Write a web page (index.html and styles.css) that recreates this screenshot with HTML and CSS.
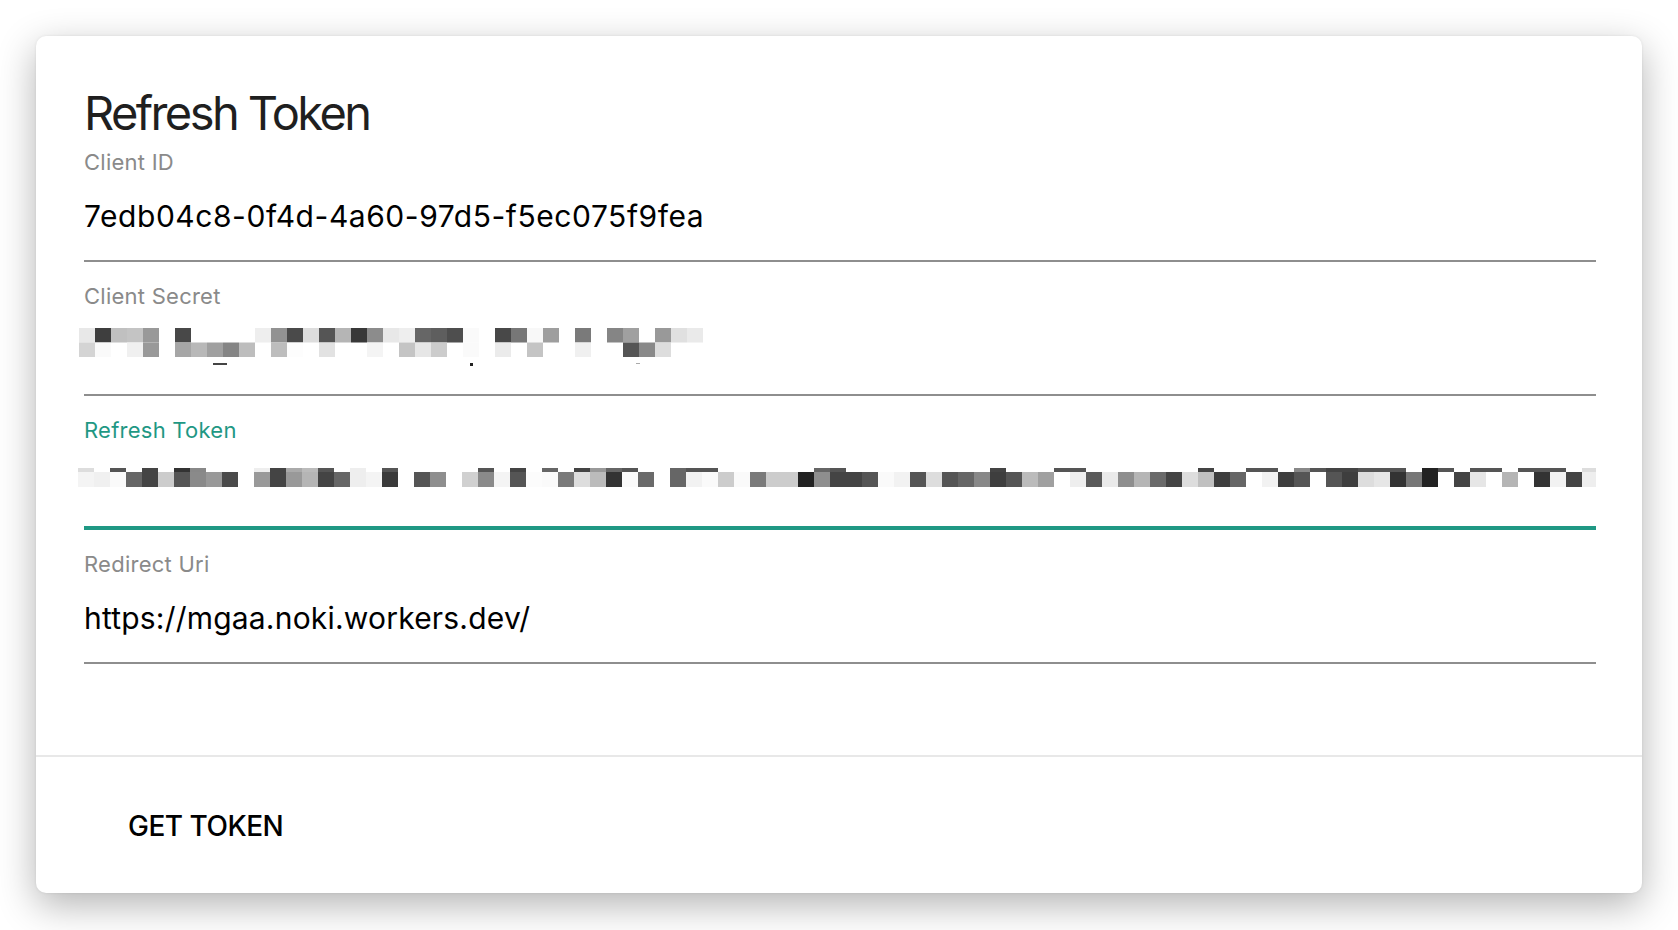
FILE: index.html
```html
<!DOCTYPE html>
<html lang="en">
<head>
<meta charset="utf-8">
<title>Refresh Token</title>
<link rel="stylesheet" href="styles.css">
</head>
<body>
<div class="card">
  <div class="card-content">
    <h1 class="title">Refresh Token</h1>

    <div class="field">
      <div class="label">Client ID</div>
      <div class="value value-id">7edb04c8-0f4d-4a60-97d5-f5ec075f9fea</div>
    </div>

    <div class="field">
      <div class="label">Client Secret</div>
      <div class="value value-redacted">
        <svg class="secret-pixels" width="624" height="40" viewBox="0 0 624 40" aria-label="redacted">
          <g class="row1">
            <rect x="0" y="0" width="16" height="14.5" fill="#e8e8e8"/>
            <rect x="16" y="0" width="16" height="14.5" fill="#3e3e3e"/>
            <rect x="32" y="0" width="16" height="14.5" fill="#c0c0c0"/>
            <rect x="48" y="0" width="16" height="14.5" fill="#c4c4c4"/>
            <rect x="64" y="0" width="16" height="14.5" fill="#999"/>
            <rect x="96" y="0" width="16" height="14.5" fill="#484848"/>
            <rect x="176" y="0" width="16" height="14.5" fill="#eee"/>
            <rect x="192" y="0" width="16" height="14.5" fill="#929292"/>
            <rect x="208" y="0" width="16" height="14.5" fill="#4a4a4a"/>
            <rect x="224" y="0" width="16" height="14.5" fill="#ddd"/>
            <rect x="240" y="0" width="16" height="14.5" fill="#555"/>
            <rect x="256" y="0" width="16" height="14.5" fill="#b5b5b5"/>
            <rect x="272" y="0" width="16" height="14.5" fill="#383838"/>
            <rect x="288" y="0" width="16" height="14.5" fill="#8c8c8c"/>
            <rect x="304" y="0" width="16" height="14.5" fill="#e8e8e8"/>
            <rect x="320" y="0" width="16" height="14.5" fill="#eee"/>
            <rect x="336" y="0" width="16" height="14.5" fill="#666"/>
            <rect x="352" y="0" width="16" height="14.5" fill="#5e5e5e"/>
            <rect x="368" y="0" width="16" height="14.5" fill="#4e4e4e"/>
            <rect x="384" y="0" width="16" height="14.5" fill="#fafafa"/>
            <rect x="416" y="0" width="16" height="14.5" fill="#484848"/>
            <rect x="432" y="0" width="16" height="14.5" fill="#777"/>
            <rect x="448" y="0" width="16" height="14.5" fill="#f8f8f8"/>
            <rect x="464" y="0" width="16" height="14.5" fill="#9e9e9e"/>
            <rect x="496" y="0" width="16" height="14.5" fill="#7a7a7a"/>
            <rect x="528" y="0" width="16" height="14.5" fill="#858585"/>
            <rect x="544" y="0" width="16" height="14.5" fill="#a0a0a0"/>
            <rect x="576" y="0" width="16" height="14.5" fill="#999"/>
            <rect x="592" y="0" width="16" height="14.5" fill="#e0e0e0"/>
            <rect x="608" y="0" width="16" height="14.5" fill="#eaeaea"/>
          </g>
          <g class="row2">
            <rect x="0" y="14.5" width="16" height="14.5" fill="#d4d4d4"/>
            <rect x="16" y="14.5" width="16" height="14.5" fill="#fafafa"/>
            <rect x="48" y="14.5" width="16" height="14.5" fill="#f0f0f0"/>
            <rect x="64" y="14.5" width="16" height="14.5" fill="#999"/>
            <rect x="96" y="14.5" width="16" height="14.5" fill="#a6a6a6"/>
            <rect x="112" y="14.5" width="16" height="14.5" fill="#b8b8b8"/>
            <rect x="128" y="14.5" width="16" height="14.5" fill="#a0a0a0"/>
            <rect x="144" y="14.5" width="16" height="14.5" fill="#858585"/>
            <rect x="160" y="14.5" width="16" height="14.5" fill="#bdbdbd"/>
            <rect x="192" y="14.5" width="16" height="14.5" fill="#bdbdbd"/>
            <rect x="208" y="14.5" width="16" height="14.5" fill="#fdfdfd"/>
            <rect x="240" y="14.5" width="16" height="14.5" fill="#e2e2e2"/>
            <rect x="288" y="14.5" width="16" height="14.5" fill="#f4f4f4"/>
            <rect x="320" y="14.5" width="16" height="14.5" fill="#c4c4c4"/>
            <rect x="336" y="14.5" width="16" height="14.5" fill="#e6e6e6"/>
            <rect x="352" y="14.5" width="16" height="14.5" fill="#ccc"/>
            <rect x="384" y="14.5" width="16" height="14.5" fill="#fafafa"/>
            <rect x="416" y="14.5" width="16" height="14.5" fill="#ebebeb"/>
            <rect x="448" y="14.5" width="16" height="14.5" fill="#c4c4c4"/>
            <rect x="496" y="14.5" width="16" height="14.5" fill="#f0f0f0"/>
            <rect x="544" y="14.5" width="16" height="14.5" fill="#555"/>
            <rect x="560" y="14.5" width="16" height="14.5" fill="#898989"/>
            <rect x="576" y="14.5" width="16" height="14.5" fill="#ddd"/>
          </g>
          <g class="marks">
            <rect x="134" y="35" width="14" height="2" fill="#444"/>
            <rect x="391" y="35" width="3" height="3" fill="#222"/>
            <rect x="557" y="35" width="4" height="1" fill="#aaa"/>
          </g>
        </svg>
      </div>
    </div>

    <div class="field field-focused">
      <div class="label label-focused">Refresh Token</div>
      <div class="value value-redacted">
        <svg class="token-pixels" width="1518" height="19" viewBox="0 0 1518 19" aria-label="redacted">
          <g class="tops">
            <rect x="0" y="0" width="16" height="4" fill="#ddd"/>
            <rect x="32" y="0" width="16" height="4" fill="#555"/>
            <rect x="64" y="0" width="16" height="4" fill="#444"/>
            <rect x="96" y="0" width="16" height="4" fill="#333"/>
            <rect x="112" y="0" width="16" height="4" fill="#888"/>
            <rect x="176" y="0" width="16" height="4" fill="#eee"/>
            <rect x="192" y="0" width="16" height="4" fill="#444"/>
            <rect x="208" y="0" width="16" height="4" fill="#aaa"/>
            <rect x="224" y="0" width="16" height="4" fill="#bbb"/>
            <rect x="240" y="0" width="16" height="4" fill="#555"/>
            <rect x="272" y="0" width="16" height="4" fill="#eee"/>
            <rect x="304" y="0" width="16" height="4" fill="#555"/>
            <rect x="400" y="0" width="16" height="4" fill="#555"/>
            <rect x="432" y="0" width="16" height="4" fill="#444"/>
            <rect x="464" y="0" width="16" height="4" fill="#666"/>
            <rect x="496" y="0" width="16" height="4" fill="#444"/>
            <rect x="512" y="0" width="16" height="4" fill="#999"/>
            <rect x="528" y="0" width="16" height="4" fill="#666"/>
            <rect x="544" y="0" width="16" height="4" fill="#555"/>
            <rect x="592" y="0" width="16" height="4" fill="#666"/>
            <rect x="608" y="0" width="16" height="4" fill="#555"/>
            <rect x="624" y="0" width="16" height="4" fill="#555"/>
            <rect x="736" y="0" width="16" height="4" fill="#666"/>
            <rect x="752" y="0" width="16" height="4" fill="#555"/>
            <rect x="912" y="0" width="16" height="4" fill="#444"/>
            <rect x="976" y="0" width="16" height="4" fill="#555"/>
            <rect x="992" y="0" width="16" height="4" fill="#555"/>
            <rect x="1120" y="0" width="16" height="4" fill="#444"/>
            <rect x="1168" y="0" width="16" height="4" fill="#555"/>
            <rect x="1184" y="0" width="16" height="4" fill="#555"/>
            <rect x="1216" y="0" width="16" height="4" fill="#888"/>
            <rect x="1232" y="0" width="16" height="4" fill="#555"/>
            <rect x="1248" y="0" width="16" height="4" fill="#444"/>
            <rect x="1264" y="0" width="16" height="4" fill="#444"/>
            <rect x="1280" y="0" width="16" height="4" fill="#555"/>
            <rect x="1296" y="0" width="16" height="4" fill="#555"/>
            <rect x="1312" y="0" width="16" height="4" fill="#555"/>
            <rect x="1344" y="0" width="16" height="4" fill="#222"/>
            <rect x="1360" y="0" width="16" height="4" fill="#555"/>
            <rect x="1392" y="0" width="16" height="4" fill="#555"/>
            <rect x="1408" y="0" width="16" height="4" fill="#555"/>
            <rect x="1440" y="0" width="16" height="4" fill="#555"/>
            <rect x="1456" y="0" width="16" height="4" fill="#555"/>
            <rect x="1472" y="0" width="16" height="4" fill="#555"/>
            <rect x="1504" y="0" width="14" height="4" fill="#ddd"/>
          </g>
          <g class="mains">
            <rect x="0" y="4" width="16" height="15" fill="#f4f4f4"/>
            <rect x="16" y="4" width="16" height="15" fill="#f0f0f0"/>
            <rect x="32" y="4" width="16" height="15" fill="#fafafa"/>
            <rect x="48" y="4" width="16" height="15" fill="#666"/>
            <rect x="64" y="4" width="16" height="15" fill="#444"/>
            <rect x="80" y="4" width="16" height="15" fill="#ccc"/>
            <rect x="96" y="4" width="16" height="15" fill="#555"/>
            <rect x="112" y="4" width="16" height="15" fill="#8a8a8a"/>
            <rect x="128" y="4" width="16" height="15" fill="#999"/>
            <rect x="144" y="4" width="16" height="15" fill="#4a4a4a"/>
            <rect x="176" y="4" width="16" height="15" fill="#999"/>
            <rect x="192" y="4" width="16" height="15" fill="#444"/>
            <rect x="208" y="4" width="16" height="15" fill="#999"/>
            <rect x="224" y="4" width="16" height="15" fill="#b5b5b5"/>
            <rect x="240" y="4" width="16" height="15" fill="#444"/>
            <rect x="256" y="4" width="16" height="15" fill="#666"/>
            <rect x="272" y="4" width="16" height="15" fill="#eee"/>
            <rect x="288" y="4" width="16" height="15" fill="#f4f4f4"/>
            <rect x="304" y="4" width="16" height="15" fill="#3a3a3a"/>
            <rect x="336" y="4" width="16" height="15" fill="#555"/>
            <rect x="352" y="4" width="16" height="15" fill="#8e8e8e"/>
            <rect x="384" y="4" width="16" height="15" fill="#d0d0d0"/>
            <rect x="400" y="4" width="16" height="15" fill="#8a8a8a"/>
            <rect x="416" y="4" width="16" height="15" fill="#f4f4f4"/>
            <rect x="432" y="4" width="16" height="15" fill="#555"/>
            <rect x="448" y="4" width="16" height="15" fill="#fcfcfc"/>
            <rect x="464" y="4" width="16" height="15" fill="#fafafa"/>
            <rect x="480" y="4" width="16" height="15" fill="#7a7a7a"/>
            <rect x="496" y="4" width="16" height="15" fill="#ddd"/>
            <rect x="512" y="4" width="16" height="15" fill="#bbb"/>
            <rect x="528" y="4" width="16" height="15" fill="#333"/>
            <rect x="544" y="4" width="16" height="15" fill="#fafafa"/>
            <rect x="560" y="4" width="16" height="15" fill="#6a6a6a"/>
            <rect x="592" y="4" width="16" height="15" fill="#666"/>
            <rect x="608" y="4" width="16" height="15" fill="#f2f2f2"/>
            <rect x="624" y="4" width="16" height="15" fill="#fafafa"/>
            <rect x="640" y="4" width="16" height="15" fill="#ccc"/>
            <rect x="656" y="4" width="16" height="15" fill="#fafafa"/>
            <rect x="672" y="4" width="16" height="15" fill="#7a7a7a"/>
            <rect x="688" y="4" width="16" height="15" fill="#ccc"/>
            <rect x="704" y="4" width="16" height="15" fill="#ccc"/>
            <rect x="720" y="4" width="16" height="15" fill="#222"/>
            <rect x="736" y="4" width="16" height="15" fill="#8e8e8e"/>
            <rect x="752" y="4" width="16" height="15" fill="#444"/>
            <rect x="768" y="4" width="16" height="15" fill="#444"/>
            <rect x="784" y="4" width="16" height="15" fill="#555"/>
            <rect x="800" y="4" width="16" height="15" fill="#fafafa"/>
            <rect x="816" y="4" width="16" height="15" fill="#f2f2f2"/>
            <rect x="832" y="4" width="16" height="15" fill="#555"/>
            <rect x="848" y="4" width="16" height="15" fill="#ddd"/>
            <rect x="864" y="4" width="16" height="15" fill="#555"/>
            <rect x="880" y="4" width="16" height="15" fill="#666"/>
            <rect x="896" y="4" width="16" height="15" fill="#888"/>
            <rect x="912" y="4" width="16" height="15" fill="#3e3e3e"/>
            <rect x="928" y="4" width="16" height="15" fill="#555"/>
            <rect x="944" y="4" width="16" height="15" fill="#bbb"/>
            <rect x="960" y="4" width="16" height="15" fill="#a0a0a0"/>
            <rect x="992" y="4" width="16" height="15" fill="#eee"/>
            <rect x="1008" y="4" width="16" height="15" fill="#5a5a5a"/>
            <rect x="1024" y="4" width="16" height="15" fill="#eaeaea"/>
            <rect x="1040" y="4" width="16" height="15" fill="#8e8e8e"/>
            <rect x="1056" y="4" width="16" height="15" fill="#b5b5b5"/>
            <rect x="1072" y="4" width="16" height="15" fill="#6a6a6a"/>
            <rect x="1088" y="4" width="16" height="15" fill="#444"/>
            <rect x="1104" y="4" width="16" height="15" fill="#ddd"/>
            <rect x="1120" y="4" width="16" height="15" fill="#c0c0c0"/>
            <rect x="1136" y="4" width="16" height="15" fill="#3e3e3e"/>
            <rect x="1152" y="4" width="16" height="15" fill="#666"/>
            <rect x="1184" y="4" width="16" height="15" fill="#f2f2f2"/>
            <rect x="1200" y="4" width="16" height="15" fill="#3e3e3e"/>
            <rect x="1216" y="4" width="16" height="15" fill="#555"/>
            <rect x="1248" y="4" width="16" height="15" fill="#555"/>
            <rect x="1264" y="4" width="16" height="15" fill="#3e3e3e"/>
            <rect x="1280" y="4" width="16" height="15" fill="#ddd"/>
            <rect x="1296" y="4" width="16" height="15" fill="#e6e6e6"/>
            <rect x="1312" y="4" width="16" height="15" fill="#333"/>
            <rect x="1328" y="4" width="16" height="15" fill="#777"/>
            <rect x="1344" y="4" width="16" height="15" fill="#222"/>
            <rect x="1376" y="4" width="16" height="15" fill="#444"/>
            <rect x="1392" y="4" width="16" height="15" fill="#e6e6e6"/>
            <rect x="1424" y="4" width="16" height="15" fill="#b5b5b5"/>
            <rect x="1456" y="4" width="16" height="15" fill="#333"/>
            <rect x="1472" y="4" width="16" height="15" fill="#f2f2f2"/>
            <rect x="1488" y="4" width="16" height="15" fill="#444"/>
            <rect x="1504" y="4" width="14" height="15" fill="#eee"/>
          </g>
        </svg>
      </div>
    </div>

    <div class="field">
      <div class="label">Redirect Uri</div>
      <div class="value value-url">https://mgaa.noki.workers.dev/</div>
    </div>
  </div>

  <div class="card-actions">
    <button class="btn-text" type="button">GET TOKEN</button>
  </div>
</div>
</body>
</html>
```

FILE: styles.css
```css
html, body {
  margin: 0;
  padding: 0;
  background: #ffffff;
}

body {
  font-family: "Inter", "Roboto", "Liberation Sans", sans-serif;
  color: #000;
  padding: 36px;
  box-sizing: border-box;
  height: 930px;
  overflow: hidden;
}

.card {
  background: #fff;
  border-radius: 10px;
  box-shadow: 0 12px 38px rgba(0, 0, 0, 0.30), 0 0 3px rgba(0, 0, 0, 0.08);
  overflow: hidden;
}

.card-content {
  padding: 48px 46px 91px 48px;
}

.title {
  margin: 0 0 7px 0;
  font-size: 47px;
  line-height: 58px;
  font-weight: 400;
  color: #1f1f1f;
  letter-spacing: -2.6px;
}

.field {
  position: relative;
  border-bottom: 2px solid #8e8e8e;
}

.field + .field {
  padding-top: 21px;
}

.field-focused::after {
  content: "";
  position: absolute;
  left: 0;
  right: 0;
  bottom: -2px;
  height: 4px;
  background: #1f9884;
}

.label {
  font-size: 22px;
  line-height: 26px;
  color: #8a8a8a;
  margin-bottom: 23px;
  letter-spacing: 0.25px;
}

.label-focused {
  color: #1f9884;
}

.value {
  font-size: 30px;
  line-height: 37px;
  height: 37px;
  padding-bottom: 25px;
  color: #000;
  white-space: nowrap;
}

.value-id {
  letter-spacing: 0.55px;
}

.value-url {
  letter-spacing: 0.2px;
}

.value-redacted {
  display: flow-root;
}

.secret-pixels {
  display: block;
  margin: -4px 0 0 -5px;
}

.token-pixels {
  display: block;
  margin: 2px 0 0 -6px;
}

.card-actions {
  border-top: 2px solid #e8e8e8;
  padding: 37px 0 35px 76px;
}

.btn-text {
  display: block;
  border: 0;
  background: transparent;
  font-family: "Inter", "Roboto", "Liberation Sans", sans-serif;
  font-size: 28px;
  font-weight: 500;
  line-height: 40px;
  padding: 12px 16px;
  color: #000;
  letter-spacing: -0.5px;
  cursor: pointer;
}
```
